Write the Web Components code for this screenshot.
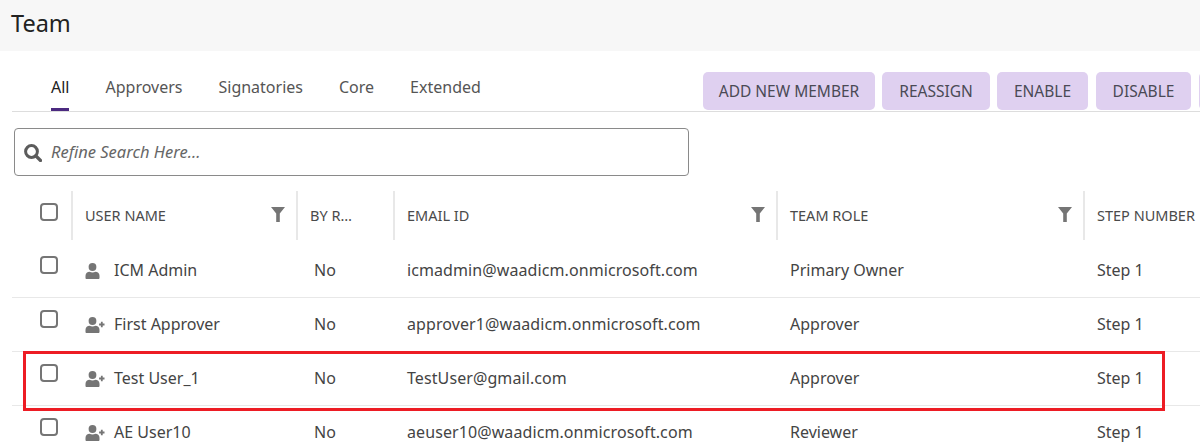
<!DOCTYPE html>
<html>
<head>
<meta charset="utf-8">
<title>Team</title>
<style>
  html, body { margin: 0; padding: 0; background: #fff; overflow: hidden; }
  body { width: 1200px; height: 448px; font-family: 'Noto Sans', sans-serif; color: #333; }
</style>
</head>
<body>
<team-page>
  <page-title>Team</page-title>
  <team-toolbar>
    <tab-item active>All</tab-item>
    <tab-item>Approvers</tab-item>
    <tab-item>Signatories</tab-item>
    <tab-item>Core</tab-item>
    <tab-item>Extended</tab-item>
    <action-button slot="actions" style="width:172px">ADD NEW MEMBER</action-button>
    <action-button slot="actions" style="width:108px">REASSIGN</action-button>
    <action-button slot="actions" style="width:91px">ENABLE</action-button>
    <action-button slot="actions" style="width:95px;margin-left:1px">DISABLE</action-button>
    <action-button slot="actions" style="width:60px;margin-left:1px"></action-button>
  </team-toolbar>
  <search-box placeholder="Refine Search Here..."></search-box>
  <team-table>
    <head-row></head-row>
    <member-row icon="user" name="ICM Admin" by-role="No" email="icmadmin@waadicm.onmicrosoft.com" role="Primary Owner" step="Step 1"></member-row>
    <member-row icon="add" name="First Approver" by-role="No" email="approver1@waadicm.onmicrosoft.com" role="Approver" step="Step 1"></member-row>
    <member-row icon="add" name="Test User_1" by-role="No" email="TestUser@gmail.com" role="Approver" step="Step 1" marked></member-row>
    <member-row icon="add" name="AE User10" by-role="No" email="aeuser10@waadicm.onmicrosoft.com" role="Reviewer" step="Step 1"></member-row>
  </team-table>
</team-page>

<script>
// shared column widths for the table rows
const COLUMNS = '60px 225px 97px 383px 307px 140px';
const TEXT_FONT = "'Noto Sans', sans-serif";

const USER_ICON = `<svg width="20" height="16" viewBox="0 0 20 16"><circle cx="7.500" cy="4" r="3.900" fill="#757575"/><path d="M.5 15v-2.200c0-2.600 2-4 4-4 1 .5 2 .7 3 .7s2-.2 3-.7c2 0 4 1.400 4 4V15c0 .5-.4 1-1 1H1.500c-.6 0-1-.5-1-1z" fill="#757575"/></svg>`;
const ADD_ICON = `<svg width="20" height="16" viewBox="0 0 20 16"><circle cx="7.500" cy="4" r="3.900" fill="#757575"/><path d="M.5 15v-2.200c0-2.600 2-4 4-4 1 .5 2 .7 3 .7s2-.2 3-.7c2 0 4 1.400 4 4V15c0 .5-.4 1-1 1H1.500c-.6 0-1-.5-1-1z" fill="#757575"/><path d="M16.800 4.800v5.400M14.100 7.500h5.400" stroke="#757575" stroke-width="1.800" fill="none"/></svg>`;
const FILTER_ICON = `<svg width="14" height="15" viewBox="0 0 14 15"><path d="M0 0h14L8.800 6.500V15H5.200V6.500z" fill="#757575"/></svg>`;

class TeamPage extends HTMLElement {
  constructor() {
    super();
    this.attachShadow({ mode: 'open' });
    this.shadowRoot.innerHTML = `
      <style>
        :host { display: block; width: 1200px; height: 448px; overflow: hidden; }
      </style>
      <slot></slot>
    `;
  }
}

class PageTitle extends HTMLElement {
  constructor() {
    super();
    this.attachShadow({ mode: 'open' });
    this.shadowRoot.innerHTML = `
      <style>
        :host {
          display: flex;
          align-items: center;
          height: 51px;
          padding: 0 0 4px 11px;
          box-sizing: border-box;
          background: #f7f7f7;
          color: #222;
          font: 23.500px/1 ${TEXT_FONT};
        }
      </style>
      <slot></slot>
    `;
  }
}

class TeamToolbar extends HTMLElement {
  constructor() {
    super();
    this.attachShadow({ mode: 'open' });
    this.shadowRoot.innerHTML = `
      <style>
        :host {
          display: flex;
          justify-content: space-between;
          align-items: flex-end;
          height: 61px;
          margin-left: 12px;
          box-sizing: border-box;
          border-bottom: 1px solid #ddd;
          white-space: nowrap;
        }
        .tabs { display: flex; gap: 36px; padding-left: 39px; }
        .actions { display: flex; gap: 7px; margin-right: -59px; padding-bottom: 1px; }
      </style>
      <div class="tabs"><slot></slot></div>
      <div class="actions"><slot name="actions"></slot></div>
    `;
  }
}

class TabItem extends HTMLElement {
  constructor() {
    super();
    this.attachShadow({ mode: 'open' });
    this.shadowRoot.innerHTML = `
      <style>
        :host {
          display: block;
          height: 35px;
          box-sizing: border-box;
          color: #555;
          font: 16px/23px ${TEXT_FONT};
        }
        :host([active]) { color: #222; border-bottom: 3px solid #4b2a80; }
      </style>
      <slot></slot>
    `;
  }
}

class ActionButton extends HTMLElement {
  constructor() {
    super();
    this.attachShadow({ mode: 'open' });
    this.shadowRoot.innerHTML = `
      <style>
        :host {
          display: block;
          height: 38px;
          box-sizing: border-box;
          background: #dfd0f0;
          border-radius: 5px;
          color: #4a4a55;
          text-align: center;
          font: 15.500px/39px ${TEXT_FONT};
        }
      </style>
      <slot></slot>
    `;
  }
}

class SearchBox extends HTMLElement {
  constructor() {
    super();
    this.attachShadow({ mode: 'open' });
    this.shadowRoot.innerHTML = `
      <style>
        :host {
          display: flex;
          align-items: center;
          gap: 9px;
          width: 675px;
          height: 48px;
          margin: 16px 0 0 14px;
          padding-left: 9px;
          box-sizing: border-box;
          border: 1px solid #8a8a8a;
          border-radius: 4px;
          color: #666;
          font: italic 16.500px/1 ${TEXT_FONT};
        }
        svg { display: block; margin-top: 2px; }
      </style>
      <svg width="18" height="18" viewBox="0 0 18 18"><circle cx="7.500" cy="7.500" r="5.900" fill="none" stroke="#5c5c5c" stroke-width="3"/><path d="M12 12l4.500 4.500" stroke="#5c5c5c" stroke-width="3.200" stroke-linecap="round"/></svg>
      <span></span>
    `;
    this.shadowRoot.querySelector('span').textContent = this.getAttribute('placeholder');
  }
}

class TeamTable extends HTMLElement {
  constructor() {
    super();
    this.attachShadow({ mode: 'open' });
    this.shadowRoot.innerHTML = `
      <style>
        :host { display: block; margin: 14px 0 0 12px; }
      </style>
      <slot></slot>
    `;
  }
}

class HeadRow extends HTMLElement {
  constructor() {
    super();
    this.attachShadow({ mode: 'open' });
    const heads = [
      ['USER NAME', true],
      ['BY R…', false],
      ['EMAIL ID', true],
      ['TEAM ROLE', true],
      ['STEP NUMBER', false],
    ];
    this.shadowRoot.innerHTML = `
      <style>
        :host {
          display: grid;
          grid-template-columns: ${COLUMNS};
          height: 54px;
          align-items: stretch;
          color: #4a4a4a;
          font: 14.500px/1 ${TEXT_FONT};
          white-space: nowrap;
        }
        .check { display: flex; justify-content: flex-end; padding: 13px 14px 0 0; }
        .box { width: 18px; height: 18px; box-sizing: border-box; border: 2px solid #757575; border-radius: 4px; background: #fff; }
        .cell {
          display: flex;
          justify-content: space-between;
          border-left: 2px solid #e8e8e8;
          margin: 1px 0 4px -1px;
          padding: 0 12px 0 12px;
          box-sizing: border-box;
        }
        .cell span { padding-top: 17px; }
        .cell svg { margin-top: 16px; }
      </style>
      <div class="check"><div class="box"></div></div>
      ${heads.map(([label, filter]) => `<div class="cell"><span>${label}</span>${filter ? FILTER_ICON : ''}</div>`).join('')}
    `;
  }
}

class MemberRow extends HTMLElement {
  constructor() {
    super();
    this.attachShadow({ mode: 'open' });
    const a = (name) => this.getAttribute(name);
    this.shadowRoot.innerHTML = `
      <style>
        :host {
          display: grid;
          grid-template-columns: ${COLUMNS};
          position: relative;
          height: 54px;
          box-sizing: border-box;
          border-bottom: 1px solid #e8e8e8;
          align-items: center;
          color: #444;
          font: 16px/1 ${TEXT_FONT};
          white-space: nowrap;
        }
        .check { display: flex; justify-content: flex-end; padding: 0 14px 12px 0; }
        .box { width: 18px; height: 18px; box-sizing: border-box; border: 2px solid #757575; border-radius: 4px; background: #fff; }
        .name { display: grid; grid-template-columns: 29px auto; align-items: center; padding-left: 13px; }
        .name svg { display: block; }
        .name span, .text { padding-bottom: 2px; }
        .text { padding-left: 13px; }
        .email { letter-spacing: .09px; }
        :host([marked])::after {
          content: '';
          position: absolute;
          left: 11px;
          top: -1px;
          width: 1142px;
          height: 60px;
          box-sizing: border-box;
          border: 3px solid #ed1c24;
        }
      </style>
      <div class="check"><div class="box"></div></div>
      <div class="name">${a('icon') === 'user' ? USER_ICON : ADD_ICON}<span>${a('name')}</span></div>
      <div class="text" style="padding-left:17px">${a('by-role')}</div>
      <div class="text email">${a('email')}</div>
      <div class="text">${a('role')}</div>
      <div class="text">${a('step')}</div>
    `;
  }
}

customElements.define('team-page', TeamPage);
customElements.define('page-title', PageTitle);
customElements.define('team-toolbar', TeamToolbar);
customElements.define('tab-item', TabItem);
customElements.define('action-button', ActionButton);
customElements.define('search-box', SearchBox);
customElements.define('team-table', TeamTable);
customElements.define('head-row', HeadRow);
customElements.define('member-row', MemberRow);
</script>
</body>
</html>
